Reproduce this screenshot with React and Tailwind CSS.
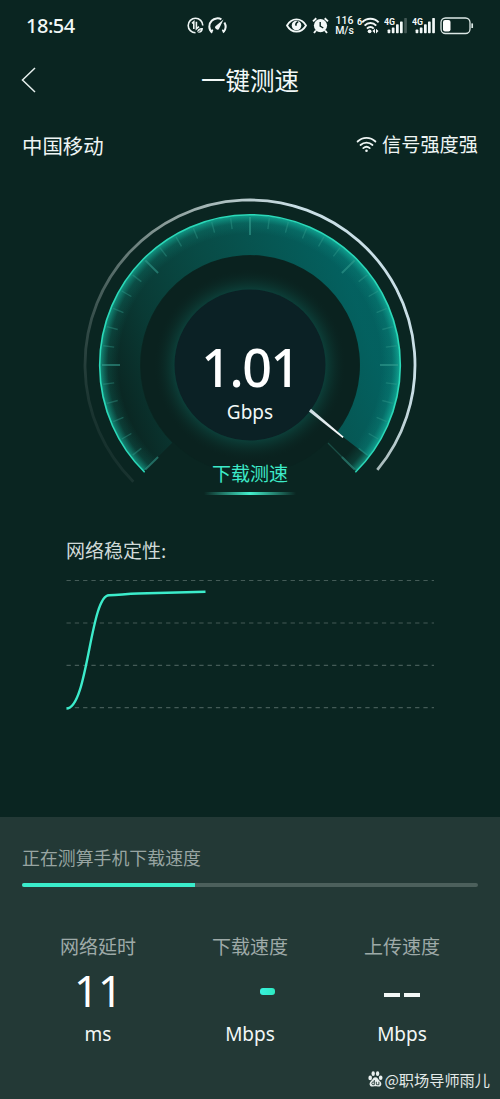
import React from "react";

const CX = 250;
const CY = 185;

const polar = (r, deg) => {
  const a = (deg * Math.PI) / 180;
  return [CX + r * Math.sin(a), CY - r * Math.cos(a)];
};

const arc = (r, from, to) => {
  const [x1, y1] = polar(r, from);
  const [x2, y2] = polar(r, to);
  return `M${x1} ${y1}A${r} ${r} 0 ${to - from > 180 ? 1 : 0} 1 ${x2} ${y2}`;
};

const band = (outer, inner, from, to) => {
  const [x2, y2] = polar(inner, to);
  const [x1, y1] = polar(inner, from);
  return `${arc(outer, from, to)}L${x2} ${y2}A${inner} ${inner} 0 ${to - from > 180 ? 1 : 0} 0 ${x1} ${y1}Z`;
};

const ticks = Array.from({ length: 37 }, (_, i) => ({ deg: -135 + i * 7.5, major: i % 6 === 0 }));

function Gauge() {
  return (
    <svg width="500" height="340" viewBox="0 0 500 340" className="col-start-1 row-start-1 block">
      <defs>
        <linearGradient id="fill" gradientUnits="userSpaceOnUse" x1="125" y1="235" x2="365" y2="150">
          <stop offset="0" stopColor="#086a62" stopOpacity="0.02" />
          <stop offset="0.2" stopColor="#086a62" stopOpacity="0.3" />
          <stop offset="0.5" stopColor="#07635d" stopOpacity="0.62" />
          <stop offset="1" stopColor="#036665" stopOpacity="0.92" />
        </linearGradient>
        <linearGradient id="halo" gradientUnits="userSpaceOnUse" x1="110" y1="300" x2="370" y2="140">
          <stop offset="0" stopColor="#dfe9e9" stopOpacity="0.02" />
          <stop offset="0.2" stopColor="#cfdcda" stopOpacity="0.2" />
          <stop offset="0.6" stopColor="#cfdcda" stopOpacity="0.65" />
          <stop offset="0.85" stopColor="#c9dbde" stopOpacity="0.9" />
          <stop offset="1" stopColor="#c9dfe6" />
        </linearGradient>
        <radialGradient id="rim" gradientUnits="userSpaceOnUse" cx={CX} cy={CY} r="151">
          <stop offset="0.87" stopColor="#12b59f" stopOpacity="0" />
          <stop offset="0.94" stopColor="#12b59f" stopOpacity="0.16" />
          <stop offset="1" stopColor="#19d3b6" stopOpacity="0.65" />
        </radialGradient>
        <radialGradient id="core" gradientUnits="userSpaceOnUse" cx={CX} cy={CY} r="96">
          <stop offset="0.78" stopColor="#0d5149" stopOpacity="0.62" />
          <stop offset="0.86" stopColor="#0c423b" stopOpacity="0.4" />
          <stop offset="1" stopColor="#0a2522" stopOpacity="0" />
        </radialGradient>
        <linearGradient id="needle" x1="0" y1="0" x2="1" y2="1">
          <stop offset="0" stopColor="#c9dbe0" />
          <stop offset="1" stopColor="#ffffff" />
        </linearGradient>
      </defs>
      <path d={arc(165, -135, 129.5)} fill="none" stroke="url(#halo)" strokeWidth="2.8" />
      <path d={band(150, 110, -135, 127.7)} fill="url(#fill)" />
      <path d={band(150, 122, -135, 135)} fill="url(#rim)" />
      {ticks.map(({ deg, major }) => {
        const [x1, y1] = polar(148, deg);
        const [x2, y2] = polar(major ? 130 : 137, deg);
        return (
          <line
            key={deg}
            x1={x1}
            y1={y1}
            x2={x2}
            y2={y2}
            stroke="#36a091"
            strokeOpacity={major ? 0.55 : 0.38}
            strokeWidth={major ? 2 : 1.4}
          />
        );
      })}
      <path d={arc(150.3, -135.5, 135.5)} fill="none" stroke="#2bd9b9" strokeWidth="1.6" />
      <path d="M328 263L356 291" stroke="#25695e" strokeOpacity="0.6" strokeWidth="1.2" />
      <circle cx={CX} cy={CY} r="109" fill="#0a211e" fillOpacity="0.6" />
      <circle cx={CX} cy={CY} r="96" fill="url(#core)" />
      <circle cx={CX} cy={CY} r="75.5" fill="#0b2125" />
      <path d="M311 228.8L343.6 256.8L342.6 258L309 231.4Z" fill="url(#needle)" />
    </svg>
  );
}

function DataSaverIcon() {
  return (
    <svg width="17" height="17" viewBox="0 0 17 17" fill="none" stroke="#eef5f4" strokeWidth="1.6">
      <path d="M15.8 8.5A7.3 7.3 0 1 0 8.5 15.8" />
      <path d="M5 6.3L6.8 4.8V12M9.4 4.8V11.8L12 9.6" />
      <path d="M10.5 15.5C9.8 12.3 12 10.8 16 10.9C16 14.4 13.8 16.4 10.5 15.5Z" fill="#eef5f4" stroke="none" />
      <path d="M10 16L13.7 13" stroke="#0b2521" strokeWidth="0.8" />
    </svg>
  );
}

function SpeedIcon() {
  return (
    <svg width="19" height="17" viewBox="0 0 19 17" fill="none" stroke="#eef5f4" strokeWidth="2">
      <path d="M4.3 15.6C0.3 12.4 0.5 6.8 3.7 3.7C6.4 1.1 10.6 0.7 13.4 2.4" />
      <path d="M16.4 5.6C18.4 9.2 17.7 13 14.9 15.6" />
      <path d="M2.3 14.5L5 13M16.9 14.5L14.2 13" strokeWidth="1.6" />
      <path d="M15.5 2.6L11.3 11.2A2.1 2.1 0 1 1 8 8.8Z" fill="#eef5f4" stroke="none" />
    </svg>
  );
}

function EyeIcon() {
  return (
    <svg width="21" height="15" viewBox="0 0 21 15">
      <path d="M1 7.5C5.5-0.6 15.5-0.6 20 7.5C15.5 15.6 5.5 15.6 1 7.5Z" fill="none" stroke="#f3f9f8" strokeWidth="1.8" />
      <circle cx="10.5" cy="7.5" r="4.8" fill="#f3f9f8" />
      <path d="M10.2 7.7A2.4 2.4 0 0 1 12.2 3.9A3 3 0 0 0 10.2 7.7Z" fill="#0b2521" stroke="#0b2521" strokeWidth="1.3" />
    </svg>
  );
}

function AlarmIcon() {
  return (
    <svg width="17" height="17" viewBox="0 0 17 17" fill="none" stroke="#f3f9f8">
      <circle cx="8.5" cy="8.6" r="6.6" fill="#f3f9f8" stroke="none" />
      <path d="M1 4.4L4.3 1.2M16 4.4L12.7 1.2M3.9 13.5L2 16M13.1 13.5L15 16" strokeWidth="1.9" />
      <path d="M8.2 4.9V9.2L11.3 11" stroke="#0b2521" strokeWidth="1.4" />
    </svg>
  );
}

function StatusWifi() {
  return (
    <svg width="23" height="17" viewBox="0 0 23 17" fill="none" stroke="#f3f9f8" strokeWidth="2">
      <text x="0" y="8" fontSize="9" fontWeight="700" fontFamily="Roboto, sans-serif" fill="#f3f9f8" stroke="none">6</text>
      <path d="M5.2 5.4C9.6 0.6 17.2 0.6 21.6 5.4M7.6 8.6C10.9 5 16 5 19.2 8.6M10 11.6C12 9.5 14.8 9.5 16.7 11.6" />
      <circle cx="12.6" cy="14.3" r="1.9" fill="#f3f9f8" stroke="none" />
      <path d="M18 11.7V16.5L15.4 14.1ZM19 11.7V16.5L21.5 14.1Z" fill="#f3f9f8" stroke="none" />
    </svg>
  );
}

function Signal({ weak }) {
  return (
    <svg width="24" height="17" viewBox="0 0 24 17" fill="#f3f9f8">
      <text x="0" y="8.2" fontSize="9" fontWeight="700" fontFamily="Roboto, sans-serif" textLength="11" lengthAdjust="spacingAndGlyphs">4G</text>
      <rect x="3.6" y="12.6" width="2.7" height="3.6" rx="0.7" />
      <rect x="7.8" y="10.4" width="2.7" height="5.8" rx="0.7" />
      <rect x="12" y="7.2" width="2.7" height="9" rx="0.7" />
      <rect x="16" y="4.4" width="2.7" height="11.8" rx="0.7" />
      <rect x="20.2" y="1" width="2.7" height="15.2" rx="0.7" fillOpacity={weak ? 0.25 : 1} />
    </svg>
  );
}

function StatusBar() {
  return (
    <div className="flex h-[50px] items-center pl-[26px] pt-px text-[#f1f8f7]">
      <div className="w-[161px] font-['Noto_Sans',sans-serif] text-[20px] font-medium leading-none tracking-[-0.5px]">18:54</div>
      <DataSaverIcon />
      <div className="ml-1"><SpeedIcon /></div>
      <div className="ml-[59px]"><EyeIcon /></div>
      <div className="ml-[5px]"><AlarmIcon /></div>
      <div className="ml-1.5 w-[19px] whitespace-nowrap text-center font-[Roboto,sans-serif] text-[10.5px] font-medium leading-[10px]">
        <div>116</div>
        <div>M/s</div>
      </div>
      <div className="ml-[3px]"><StatusWifi /></div>
      <div className="ml-1"><Signal weak /></div>
      <div className="ml-1"><Signal /></div>
      <svg width="34" height="18" viewBox="0 0 34 18" className="ml-1">
        <rect x="1" y="1" width="29" height="15.5" rx="4.5" fill="none" stroke="#dce8e6" strokeWidth="1.3" />
        <rect x="3" y="3" width="7.5" height="11.5" rx="2" fill="#fff" />
        <path d="M32.2 6.4V11" stroke="#dce8e6" strokeWidth="1.7" />
      </svg>
    </div>
  );
}

function Metric({ label, unit, children }) {
  return (
    <div className="flex flex-1 flex-col items-center">
      <div className="text-[19px] leading-[26px] text-[#9eaaa8]">{label}</div>
      <div className="mt-[9px] flex h-[46px] items-center justify-center">{children}</div>
      <div className="mt-[7px] font-['Noto_Sans',sans-serif] text-[19px] leading-[26px] text-[#f2f7f6]">{unit}</div>
    </div>
  );
}

export default function App() {
  return (
    <div className="flex h-[1099px] w-[500px] flex-col overflow-hidden bg-[#0a2521] font-['Noto_Sans_CJK_SC',sans-serif]">
      <StatusBar />
      <header className="grid h-[60px] grid-cols-[60px_1fr_60px] items-center">
        <svg width="16" height="28" viewBox="0 0 16 28" className="ml-[21px]" fill="none" stroke="#e6efed" strokeWidth="1.5">
          <path d="M14 2L1.5 14L14 26" />
        </svg>
        <h1 className="text-center text-[24.5px] leading-none text-[#f2f8f7]">一键测速</h1>
      </header>
      <div className="flex h-[70px] items-center justify-between pl-[22px] pr-[22px] text-[#eef5f4]">
        <span className="text-[20.4px] leading-none">中国移动</span>
        <span className="flex items-center gap-[5px] text-[19.2px] leading-none">
          <svg width="21" height="17" viewBox="0 0 21 17" fill="none" stroke="#eef5f4" strokeWidth="1.8" strokeLinecap="round">
            <path d="M1.6 5.5C6.6 0.6 14.4 0.6 19.4 5.5M4.5 9C8 5.7 13 5.7 16.5 9M7.3 12.1C9.2 10.5 11.8 10.5 13.7 12.1" />
            <circle cx="10.5" cy="14.7" r="1.3" fill="#eef5f4" stroke="none" />
          </svg>
          信号强度强
        </span>
      </div>

      <section className="grid h-[340px] grid-cols-1">
        <Gauge />
        <div className="col-start-1 row-start-1 flex flex-col items-center pt-[157px]">
          <div className="font-['Noto_Sans',sans-serif] text-[52px] font-medium leading-[60px] tracking-[-1.5px] text-white">1.01</div>
          <div className="mt-[2px] font-['Noto_Sans',sans-serif] text-[19px] leading-[26px] text-[#f2f8f7]">Gbps</div>
          <div className="mt-[35px] text-[19px] leading-[26px] text-[#3deac8]">下载测速</div>
          <div className="mt-[6px] h-[3px] w-[92px] bg-linear-to-r from-transparent via-[#43efcc] to-transparent" />
        </div>
      </section>

      <section className="h-[297px] pl-[66px] pt-[16px]">
        <h2 className="text-[19px] leading-[28px] text-[#d0dad8]">网络稳定性:</h2>
        <svg width="370" height="140" viewBox="0 0 370 140" className="mt-[9px] block" fill="none">
          <path d="M0.5 7.5H368M0.5 50H368M0.5 92.3H368M0.5 134.7H368" stroke="#445b57" strokeWidth="1.2" strokeDasharray="4.3 4" />
          <path d="M0.5 135.5C22 135.5 24 23 43 22.3C54 22 60 20.7 72 20.5L139.5 18.7" stroke="#3ceccb" strokeWidth="2.4" />
        </svg>
      </section>

      <section className="flex flex-1 flex-col bg-[#233936] px-[22px] pt-[27px]">
        <div className="text-[17.9px] leading-[26px] text-[#98a5a2]">正在测算手机下载速度</div>
        <div className="mt-[13px] h-1 overflow-hidden rounded-full bg-[#4c605c]">
          <div className="h-full w-[38%] bg-[#3aeccb]" />
        </div>
        <div className="mt-[46px] flex">
          <Metric label="网络延时" unit="ms">
            <span className="font-['Noto_Sans',sans-serif] text-[43px] leading-[46px] tracking-[-0.5px] text-white">11</span>
          </Metric>
          <Metric label="下载速度" unit="Mbps">
            <span className="ml-[35px] h-[7px] w-[15px] rounded-[3px] bg-linear-to-r from-[#39f1df] to-[#2deac0]" />
          </Metric>
          <Metric label="上传速度" unit="Mbps">
            <span className="mt-[8px] flex gap-1">
              <span className="h-[3.5px] w-4 bg-[#f3f8f7]" />
              <span className="h-[3.5px] w-4 bg-[#f3f8f7]" />
            </span>
          </Metric>
        </div>
        <div className="mr-[-12px] mt-[19px] flex items-center justify-end gap-0.5 text-[15.2px] leading-[26px] text-[#e3eae9]">
          <svg width="15" height="16" viewBox="0 0 15 16" fill="#e9f0ef">
            <ellipse cx="2.2" cy="6.9" rx="1.8" ry="2.3" />
            <ellipse cx="5.2" cy="2.7" rx="1.7" ry="2.4" />
            <ellipse cx="9.6" cy="2.7" rx="1.7" ry="2.4" />
            <ellipse cx="12.7" cy="6.7" rx="1.8" ry="2.3" />
            <path d="M7.4 6.2C9.7 6.2 10 8.3 11.8 9.9C14.8 12.7 13.1 16 9.9 15.5C8.1 15.2 6.9 15.2 5.1 15.5C1.9 16 0.1 12.7 3.1 9.9C4.9 8.2 5.1 6.2 7.4 6.2Z" />
            <path d="M6.3 9V13.7H4.9C3.5 13.7 3.5 11 4.9 11H6.3M8.3 10.8V13C8.3 13.7 8.6 13.7 9.2 13.7H10.9V10.8" fill="none" stroke="#233936" strokeWidth="0.9" />
          </svg>
          <span>@职场导师雨儿</span>
        </div>
      </section>
    </div>
  );
}
